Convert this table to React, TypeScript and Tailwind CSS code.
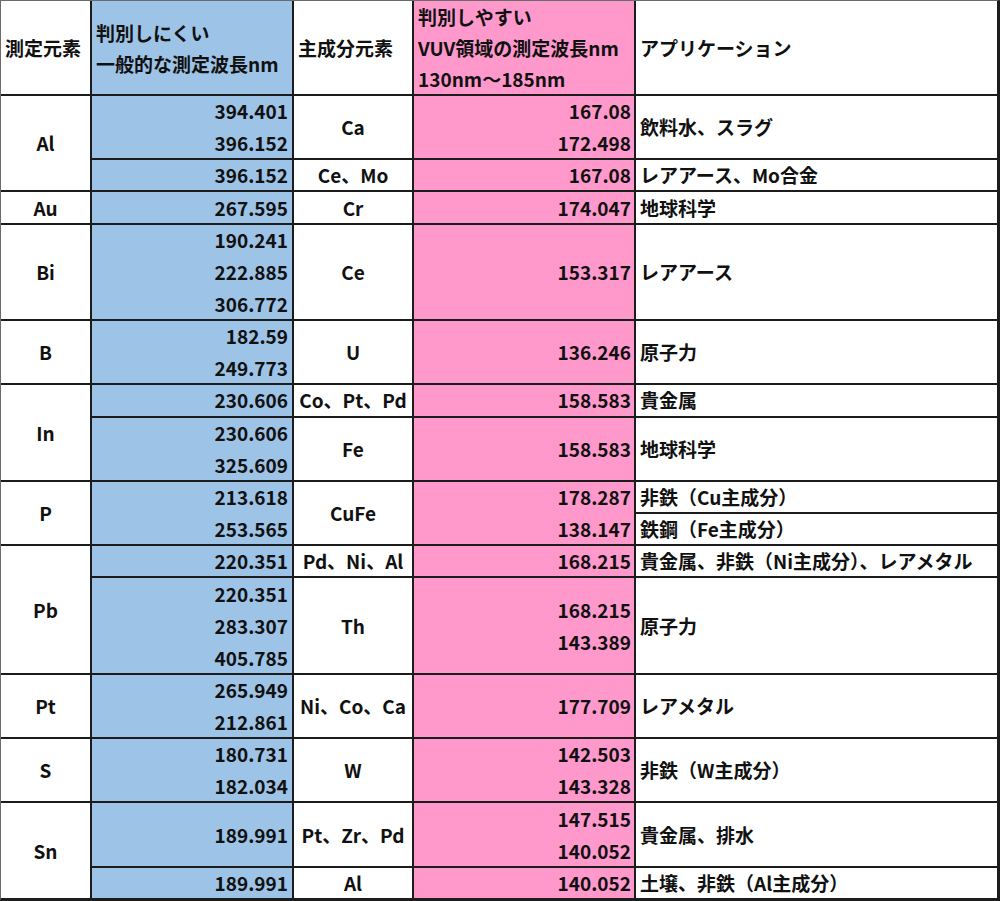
import React from "react";

type Kind = "el" | "blue" | "main" | "pink" | "app";

type Cell = {
  pos: string;
  kind: Kind;
  lines: string[];
};

const kindClass: Record<Kind, string> = {
  el: "bg-white items-center font-bold",
  blue: "bg-[#9dc3e6] items-end pr-[4px] font-bold",
  main: "bg-white items-center font-bold",
  pink: "bg-[#ff99cc] items-end pr-[3px] font-semibold",
  app: "bg-white items-start pl-[4px] font-semibold",
};

const cells: Cell[] = [
  // Al
  { pos: "col-start-1 row-start-2 row-span-3", kind: "el", lines: ["Al"] },
  { pos: "col-start-2 row-start-2 row-span-2", kind: "blue", lines: ["394.401", "396.152"] },
  { pos: "col-start-3 row-start-2 row-span-2", kind: "main", lines: ["Ca"] },
  { pos: "col-start-4 row-start-2 row-span-2", kind: "pink", lines: ["167.08", "172.498"] },
  { pos: "col-start-5 row-start-2 row-span-2", kind: "app", lines: ["飲料水、スラグ"] },
  { pos: "col-start-2 row-start-4", kind: "blue", lines: ["396.152"] },
  { pos: "col-start-3 row-start-4", kind: "main", lines: ["Ce、Mo"] },
  { pos: "col-start-4 row-start-4", kind: "pink", lines: ["167.08"] },
  { pos: "col-start-5 row-start-4", kind: "app", lines: ["レアアース、Mo合金"] },
  // Au
  { pos: "col-start-1 row-start-5", kind: "el", lines: ["Au"] },
  { pos: "col-start-2 row-start-5", kind: "blue", lines: ["267.595"] },
  { pos: "col-start-3 row-start-5", kind: "main", lines: ["Cr"] },
  { pos: "col-start-4 row-start-5", kind: "pink", lines: ["174.047"] },
  { pos: "col-start-5 row-start-5", kind: "app", lines: ["地球科学"] },
  // Bi
  { pos: "col-start-1 row-start-6 row-span-3", kind: "el", lines: ["Bi"] },
  { pos: "col-start-2 row-start-6 row-span-3", kind: "blue", lines: ["190.241", "222.885", "306.772"] },
  { pos: "col-start-3 row-start-6 row-span-3", kind: "main", lines: ["Ce"] },
  { pos: "col-start-4 row-start-6 row-span-3", kind: "pink", lines: ["153.317"] },
  { pos: "col-start-5 row-start-6 row-span-3", kind: "app", lines: ["レアアース"] },
  // B
  { pos: "col-start-1 row-start-9 row-span-2", kind: "el", lines: ["B"] },
  { pos: "col-start-2 row-start-9 row-span-2", kind: "blue", lines: ["182.59", "249.773"] },
  { pos: "col-start-3 row-start-9 row-span-2", kind: "main", lines: ["U"] },
  { pos: "col-start-4 row-start-9 row-span-2", kind: "pink", lines: ["136.246"] },
  { pos: "col-start-5 row-start-9 row-span-2", kind: "app", lines: ["原子力"] },
  // In
  { pos: "col-start-1 row-start-11 row-span-3", kind: "el", lines: ["In"] },
  { pos: "col-start-2 row-start-11", kind: "blue", lines: ["230.606"] },
  { pos: "col-start-3 row-start-11", kind: "main", lines: ["Co、Pt、Pd"] },
  { pos: "col-start-4 row-start-11", kind: "pink", lines: ["158.583"] },
  { pos: "col-start-5 row-start-11", kind: "app", lines: ["貴金属"] },
  { pos: "col-start-2 row-start-12 row-span-2", kind: "blue", lines: ["230.606", "325.609"] },
  { pos: "col-start-3 row-start-12 row-span-2", kind: "main", lines: ["Fe"] },
  { pos: "col-start-4 row-start-12 row-span-2", kind: "pink", lines: ["158.583"] },
  { pos: "col-start-5 row-start-12 row-span-2", kind: "app", lines: ["地球科学"] },
  // P
  { pos: "col-start-1 row-start-14 row-span-2", kind: "el", lines: ["P"] },
  { pos: "col-start-2 row-start-14 row-span-2", kind: "blue", lines: ["213.618", "253.565"] },
  { pos: "col-start-3 row-start-14 row-span-2", kind: "main", lines: ["CuFe"] },
  { pos: "col-start-4 row-start-14 row-span-2", kind: "pink", lines: ["178.287", "138.147"] },
  { pos: "col-start-5 row-start-14", kind: "app", lines: ["非鉄（Cu主成分）"] },
  { pos: "col-start-5 row-start-15", kind: "app", lines: ["鉄鋼（Fe主成分）"] },
  // Pb
  { pos: "col-start-1 row-start-16 row-span-4", kind: "el", lines: ["Pb"] },
  { pos: "col-start-2 row-start-16", kind: "blue", lines: ["220.351"] },
  { pos: "col-start-3 row-start-16", kind: "main", lines: ["Pd、Ni、Al"] },
  { pos: "col-start-4 row-start-16", kind: "pink", lines: ["168.215"] },
  { pos: "col-start-5 row-start-16", kind: "app", lines: ["貴金属、非鉄（Ni主成分）、レアメタル"] },
  { pos: "col-start-2 row-start-17 row-span-3", kind: "blue", lines: ["220.351", "283.307", "405.785"] },
  { pos: "col-start-3 row-start-17 row-span-3", kind: "main", lines: ["Th"] },
  { pos: "col-start-4 row-start-17 row-span-3", kind: "pink", lines: ["168.215", "143.389"] },
  { pos: "col-start-5 row-start-17 row-span-3", kind: "app", lines: ["原子力"] },
  // Pt
  { pos: "col-start-1 row-start-20 row-span-2", kind: "el", lines: ["Pt"] },
  { pos: "col-start-2 row-start-20 row-span-2", kind: "blue", lines: ["265.949", "212.861"] },
  { pos: "col-start-3 row-start-20 row-span-2", kind: "main", lines: ["Ni、Co、Ca"] },
  { pos: "col-start-4 row-start-20 row-span-2", kind: "pink", lines: ["177.709"] },
  { pos: "col-start-5 row-start-20 row-span-2", kind: "app", lines: ["レアメタル"] },
  // S
  { pos: "col-start-1 row-start-22 row-span-2", kind: "el", lines: ["S"] },
  { pos: "col-start-2 row-start-22 row-span-2", kind: "blue", lines: ["180.731", "182.034"] },
  { pos: "col-start-3 row-start-22 row-span-2", kind: "main", lines: ["W"] },
  { pos: "col-start-4 row-start-22 row-span-2", kind: "pink", lines: ["142.503", "143.328"] },
  { pos: "col-start-5 row-start-22 row-span-2", kind: "app", lines: ["非鉄（W主成分）"] },
  // Sn
  { pos: "col-start-1 row-start-24 row-span-3", kind: "el", lines: ["Sn"] },
  { pos: "col-start-2 row-start-24 row-span-2", kind: "blue", lines: ["189.991"] },
  { pos: "col-start-3 row-start-24 row-span-2", kind: "main", lines: ["Pt、Zr、Pd"] },
  { pos: "col-start-4 row-start-24 row-span-2", kind: "pink", lines: ["147.515", "140.052"] },
  { pos: "col-start-5 row-start-24 row-span-2", kind: "app", lines: ["貴金属、排水"] },
  { pos: "col-start-2 row-start-26", kind: "blue", lines: ["189.991"] },
  { pos: "col-start-3 row-start-26", kind: "main", lines: ["Al"] },
  { pos: "col-start-4 row-start-26", kind: "pink", lines: ["140.052"] },
  { pos: "col-start-5 row-start-26", kind: "app", lines: ["土壌、非鉄（Al主成分）"] },
];

export default function App() {
  return (
    <div
      className="w-[1000px] h-[901px] bg-white text-[#111] text-[19px] leading-[32px]"
      style={{ fontFamily: '"Noto Sans CJK JP", "Noto Sans", sans-serif' }}
    >
      <div className="grid grid-cols-[89px_200px_118px_220px_1fr] grid-rows-[93px_repeat(25,30.16px)] gap-[2px] bg-[#1c1c1c] border-l border-t border-l-[#6b6b6b] border-t-[#6b6b6b] border-r-[3px] border-b-[3px] border-r-[#1c1c1c] border-b-[#1c1c1c]">
        {/* header */}
        <div className="col-start-1 row-start-1 bg-white flex items-center pl-[4px] font-bold">
          測定元素
        </div>
        <div className="col-start-2 row-start-1 bg-[#9dc3e6] flex flex-col justify-center pl-[4px] font-bold leading-[31px]">
          <span>判別しにくい</span>
          <span>一般的な測定波長nm</span>
        </div>
        <div className="col-start-3 row-start-1 bg-white flex items-center pl-[4px] font-bold">
          主成分元素
        </div>
        <div className="col-start-4 row-start-1 bg-[#ff99cc] flex flex-col justify-center pl-[4px] font-semibold leading-[31px]">
          <span>判別しやすい</span>
          <span>VUV領域の測定波長nm</span>
          <span>130nm～185nm</span>
        </div>
        <div className="col-start-5 row-start-1 bg-white flex items-center pl-[4px] font-semibold">
          アプリケーション
        </div>

        {cells.map((cell, i) => (
          <div
            key={i}
            className={`${cell.pos} ${kindClass[cell.kind]} flex flex-col justify-center whitespace-nowrap`}
          >
            {cell.lines.map((t, j) => (
              <span key={j}>{t}</span>
            ))}
          </div>
        ))}
      </div>
    </div>
  );
}
